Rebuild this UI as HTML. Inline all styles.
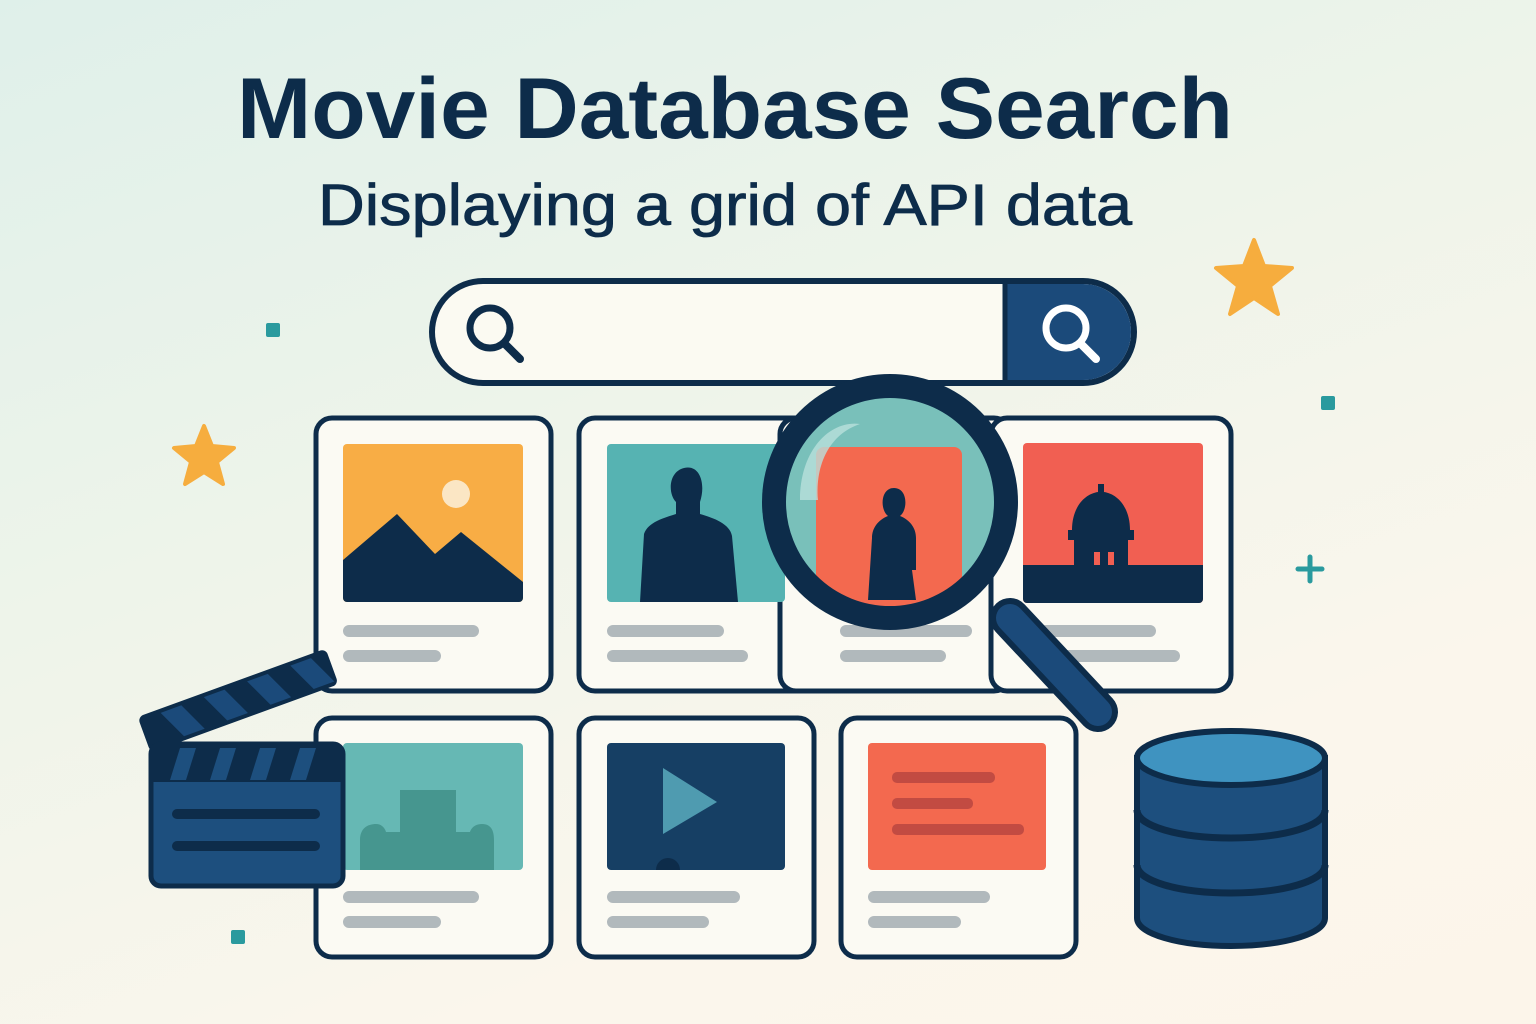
<!DOCTYPE html>
<html><head><meta charset="utf-8"><style>
html,body{margin:0;padding:0;width:1536px;height:1024px;overflow:hidden}
body{background:linear-gradient(160deg,#dff0ea 0%,#eef4ea 40%,#fbf6ec 75%,#fcf5ea 100%)}
svg{display:block}
</style></head><body>
<svg width="1536" height="1024" viewBox="0 0 1536 1024" xmlns="http://www.w3.org/2000/svg">
<defs>
<clipPath id="lens"><circle cx="890" cy="502" r="116"/></clipPath>
</defs>
<text x="237" y="138" textLength="996" lengthAdjust="spacingAndGlyphs" font-family="Liberation Sans, sans-serif" font-weight="bold" font-size="86" fill="#0d2c4a">Movie Database Search</text>
<text x="318" y="225" textLength="814" lengthAdjust="spacingAndGlyphs" font-family="Liberation Sans, sans-serif" font-size="58" fill="#0d2c4a" stroke="#0d2c4a" stroke-width="0.8">Displaying a grid of API data</text>

<!-- decorations -->
<rect x="266" y="323" width="14" height="14" rx="2" fill="#2a9a9e"/>
<rect x="1321" y="396" width="14" height="14" rx="2" fill="#2a9a9e"/>
<rect x="231" y="930" width="14" height="14" rx="2" fill="#2a9a9e"/>
<path d="M1310 557v24M1298 569h24" stroke="#2a9a9e" stroke-width="5" stroke-linecap="round"/>
<path d="M1254 240l10 26 28 2-22 18 8 28-24-16-24 16 8-28-22-18 28-2z" fill="#f6ad3e" stroke="#f6ad3e" stroke-width="4" stroke-linejoin="round"/>
<path d="M204 426l8 20 22 2-17 14 6 22-19-12-19 12 6-22-17-14 22-2z" fill="#f6ad3e" stroke="#f6ad3e" stroke-width="4" stroke-linejoin="round"/>

<!-- search bar -->
<rect x="432" y="281" width="702" height="102" rx="51" fill="#fbfaf2" stroke="#0d2c4a" stroke-width="6"/>
<path d="M1005 284h78a48 48 0 0 1 48 48v0a48 48 0 0 1-48 48h-78z" fill="#1b4a7a"/>
<line x1="1005" y1="283" x2="1005" y2="381" stroke="#0d2c4a" stroke-width="5"/>
<circle cx="490" cy="328" r="20" fill="none" stroke="#0d2c4a" stroke-width="7"/>
<line x1="505" y1="344" x2="520" y2="359" stroke="#0d2c4a" stroke-width="8" stroke-linecap="round"/>
<circle cx="1066" cy="328" r="20" fill="none" stroke="#fff" stroke-width="7"/>
<line x1="1081" y1="344" x2="1096" y2="359" stroke="#fff" stroke-width="8" stroke-linecap="round"/>

<g stroke="#0d2c4a" stroke-width="5" fill="#fbfaf3">
<rect x="316" y="418" width="235" height="273" rx="16"/>
<rect x="579" y="418" width="233" height="273" rx="16"/>
<rect x="780" y="418" width="230" height="273" rx="16"/>
<rect x="991" y="418" width="240" height="273" rx="16"/>
<rect x="316" y="718" width="235" height="239" rx="16"/>
<rect x="579" y="718" width="235" height="239" rx="16"/>
<rect x="841" y="718" width="235" height="239" rx="16"/>
</g>

<!-- card1 -->
<rect x="343" y="444" width="180" height="158" rx="4" fill="#f8ad45"/>
<circle cx="456" cy="494" r="14" fill="#fbe6c4"/>
<path d="M343 560l54-46 38 40 26-22 62 50v16a4 4 0 0 1-4 4h-172a4 4 0 0 1-4-4z" fill="#0d2c4a"/>
<!-- card2 -->
<rect x="607" y="444" width="178" height="158" rx="4" fill="#56b3b2"/>
<path d="M640 602l4-68c4-12 20-16 32-20v-12c-8-8-8-30 8-34s22 16 16 34v12c14 4 30 10 32 22l6 66z" fill="#0d2c4a"/>
<!-- card4 -->
<rect x="1023" y="443" width="180" height="160" rx="4" fill="#f15f52"/>
<path d="M1023 565h180v34a4 4 0 0 1-4 4h-172a4 4 0 0 1-4-4z" fill="#0d2c4a"/>
<path d="M1072 530c0-22 12-36 26-38v-8h6v8c14 2 26 16 26 38h4v10h-6v25h-54v-25h-6v-10z" fill="#0d2c4a"/>
<rect x="1094" y="552" width="6" height="13" fill="#f15f52"/><rect x="1108" y="552" width="6" height="13" fill="#f15f52"/>

<g fill="#b1b9bc">
<rect x="343" y="625" width="136" height="12" rx="6"/><rect x="343" y="650" width="98" height="12" rx="6"/>
<rect x="607" y="625" width="117" height="12" rx="6"/><rect x="607" y="650" width="141" height="12" rx="6"/>
<rect x="840" y="625" width="132" height="12" rx="6"/><rect x="840" y="650" width="106" height="12" rx="6"/>
<rect x="1040" y="625" width="116" height="12" rx="6"/><rect x="1040" y="650" width="140" height="12" rx="6"/>
<rect x="343" y="891" width="136" height="12" rx="6"/><rect x="343" y="916" width="98" height="12" rx="6"/>
<rect x="607" y="891" width="133" height="12" rx="6"/><rect x="607" y="916" width="102" height="12" rx="6"/>
<rect x="868" y="891" width="122" height="12" rx="6"/><rect x="868" y="916" width="93" height="12" rx="6"/>
</g>

<!-- row2 images -->
<rect x="343" y="743" width="180" height="127" rx="4" fill="#66b8b4"/>
<path d="M360 870v-30c0-12 8-16 16-16 8 0 10 8 10 8h14v-42h56v42h14s2-8 12-8 12 8 12 16v30z" fill="#46968f"/>
<rect x="607" y="743" width="178" height="127" rx="4" fill="#163f64"/>
<path d="M663 768l54 34-54 32z" fill="#4f9bb0"/>
<path d="M656 870a12 12 0 0 1 24 0z" fill="#0d2c4a"/>
<rect x="868" y="743" width="178" height="127" rx="4" fill="#f3694f"/>
<g fill="#c24b42"><rect x="892" y="772" width="103" height="11" rx="5"/><rect x="892" y="798" width="81" height="11" rx="5"/><rect x="892" y="824" width="132" height="11" rx="5"/></g>

<!-- magnifier -->
<line x1="1010" y1="618" x2="1098" y2="712" stroke="#0d2c4a" stroke-width="40" stroke-linecap="round"/>
<line x1="1010" y1="618" x2="1098" y2="712" stroke="#1b4a7a" stroke-width="28" stroke-linecap="round"/>
<g clip-path="url(#lens)">
<rect x="760" y="380" width="260" height="260" fill="#79c0ba"/>
<rect x="816" y="447" width="146" height="200" rx="8" fill="#f3694f"/>
<path d="M868 600l4-62c0-10 6-18 16-22-8-6-8-28 6-28s14 22 6 28c10 4 16 12 16 22v32h-4l4 30z" fill="#0d2c4a"/>
<path d="M800 500c0-50 30-80 60-76-30 10-45 40-42 76z" fill="#b9e0dc" opacity="0.8"/>
</g>
<circle cx="890" cy="502" r="116" fill="none" stroke="#0d2c4a" stroke-width="24"/>

<!-- clapperboard -->
<g transform="translate(12,20) rotate(-20 150 720)">
<rect x="135" y="690" width="200" height="38" rx="6" fill="#0d2c4a"/>
<g fill="#1b4a7a"><path d="M158 694h22l14 30h-22z"/><path d="M204 694h22l14 30h-22z"/><path d="M250 694h22l14 30h-22z"/><path d="M296 694h22l14 30h-22z"/></g>
</g>
<rect x="151" y="744" width="192" height="142" rx="10" fill="#1d4f7e" stroke="#0d2c4a" stroke-width="5"/>
<rect x="153" y="746" width="188" height="36" fill="#0d2c4a"/>
<g fill="#1d4f7e"><path d="M170 780l10-32h16l-10 32z"/><path d="M210 780l10-32h16l-10 32z"/><path d="M250 780l10-32h16l-10 32z"/><path d="M290 780l10-32h16l-10 32z"/></g>
<rect x="172" y="809" width="148" height="10" rx="5" fill="#0d2c4a"/>
<rect x="172" y="841" width="148" height="10" rx="5" fill="#0d2c4a"/>

<!-- database -->
<path d="M1137 758v160c0 16 42 28 94 28s94-12 94-28v-160z" fill="#1d4f7e" stroke="#0d2c4a" stroke-width="6"/>
<path d="M1137 810c0 16 42 28 94 28s94-12 94-28M1137 865c0 16 42 28 94 28s94-12 94-28" fill="none" stroke="#0d2c4a" stroke-width="7"/>
<ellipse cx="1231" cy="758" rx="94" ry="27" fill="#3f93c0" stroke="#0d2c4a" stroke-width="6"/>
</svg>
</body></html>
